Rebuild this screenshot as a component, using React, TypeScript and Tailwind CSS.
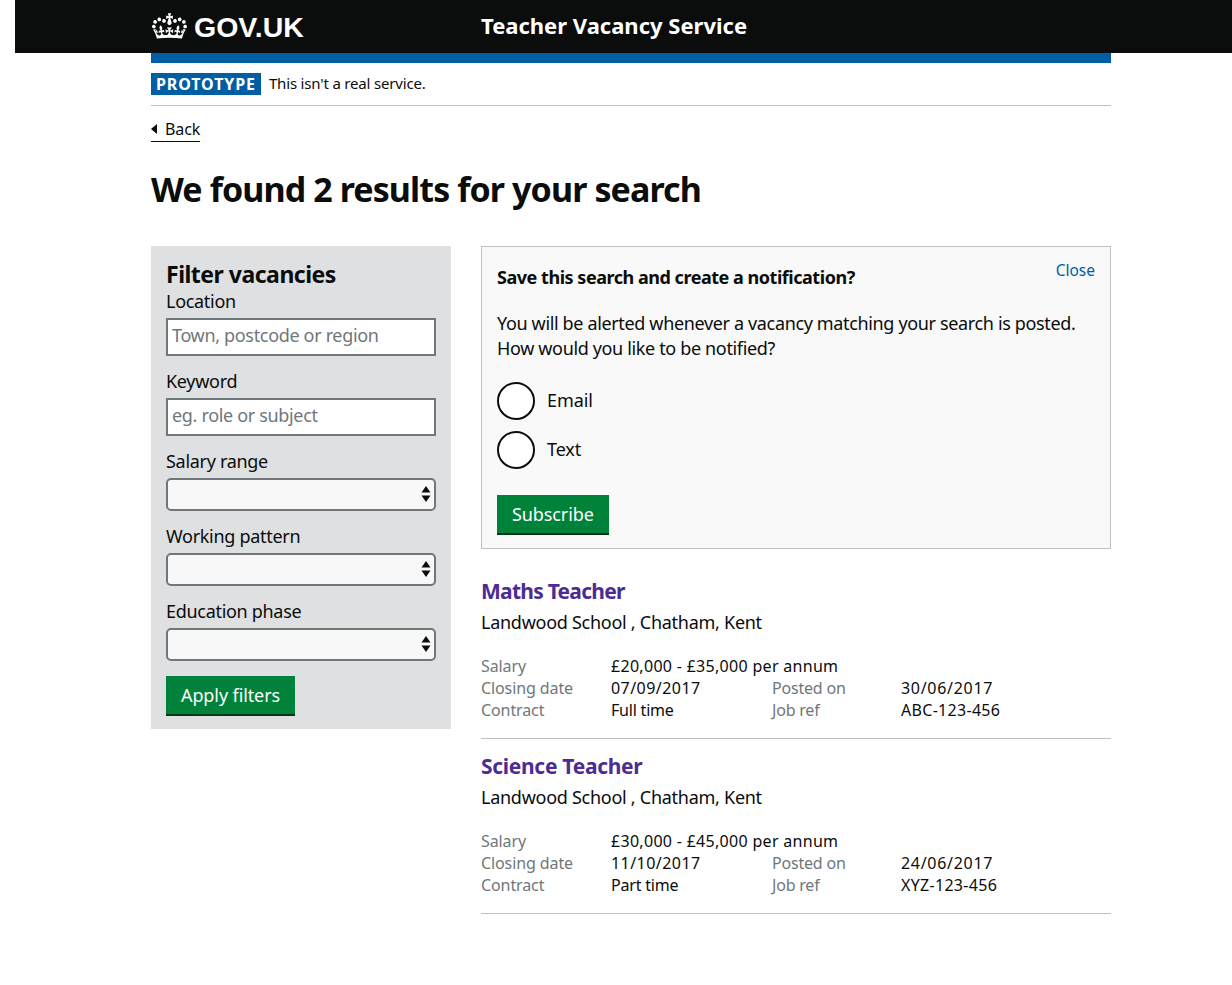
const font = "font-['Noto_Sans','Open_Sans',sans-serif]";

function Crown() {
  return (
    <svg width="35" height="26" viewBox="0 0 132 97" fill="white" className="ml-[1px] shrink-0 -translate-y-[1px]">
      <path d="M25 30.2c3.5 1.5 7.7-.2 9.1-3.7 1.5-3.6-.2-7.8-3.9-9.2-3.6-1.4-7.6.3-9.1 3.9-1.4 3.5.3 7.5 3.9 9zM9 39.5c3.6 1.5 7.8-.2 9.2-3.7 1.5-3.6-.2-7.8-3.9-9.1-3.6-1.5-7.6.2-9.1 3.8-1.4 3.5.3 7.5 3.8 9zM4.4 57.2c3.5 1.5 7.7-.2 9.1-3.8 1.5-3.6-.2-7.7-3.9-9.1-3.5-1.5-7.6.3-9.1 3.8-1.4 3.5.3 7.6 3.9 9.1zm38.3-21.4c3.5 1.5 7.7-.2 9.1-3.8 1.5-3.6-.2-7.7-3.9-9.1-3.6-1.5-7.6.3-9.1 3.8-1.3 3.6.4 7.7 3.9 9.1zm64.4-5.6c-3.6 1.5-7.8-.2-9.1-3.7-1.5-3.6.2-7.8 3.8-9.2 3.6-1.4 7.7.3 9.2 3.9 1.3 3.5-.4 7.5-3.9 9zm15.9 9.3c-3.6 1.5-7.7-.2-9.1-3.7-1.5-3.6.2-7.8 3.7-9.1 3.6-1.5 7.7.2 9.2 3.8 1.5 3.5-.3 7.5-3.8 9zm4.7 17.7c-3.6 1.5-7.8-.2-9.2-3.8-1.5-3.6.2-7.7 3.9-9.1 3.6-1.5 7.7.3 9.2 3.8 1.3 3.5-.4 7.6-3.9 9.1zM89.3 35.8c-3.6 1.5-7.8-.2-9.2-3.8-1.4-3.6.2-7.7 3.9-9.1 3.6-1.5 7.7.3 9.2 3.8 1.4 3.6-.3 7.7-3.9 9.1zM69.7 17.7l8.9 4.7V9.3l-8.9 2.8c-.2-.3-.5-.6-.9-.9L72.4 0H59.6l3.5 11.2c-.3.3-.6.5-.9.9l-8.8-2.8v13.1l8.8-4.7c.3.3.6.7.9.9l-5 15.4v.1c-.2.8-.4 1.6-.4 2.4 0 4.1 3.1 7.5 7 8.1h.2c.3 0 .7.1 1 .1.4 0 .7 0 1-.1h.2c4-.6 7.1-4.1 7.1-8.1 0-.8-.1-1.7-.4-2.4V34l-5.1-15.4c.4-.2.7-.6 1-.9zM66 92.8c16.9 0 32.8 1.1 47.1 3.2 4-16.9 8.9-26.7 14-33.5l-9.6-3.4c1 4.9 1.1 7.2 0 10.2-1.5-1.4-3-4.3-4.2-8.7L108.6 76c2.8-2 5-3.2 7.5-3.3-4.4 9.4-10 11.9-13.6 11.2-4.3-.8-6.3-4.6-5.6-7.9 1-4.7 5.7-5.9 8-.5 4.3-8.7-3-11.4-7.6-8.8 7.1-7.2 7.9-13.5 2.1-21.1-8 6.1-8.1 12.3-4.5 20.8-4.7-5.4-12.1-2.5-9.5 6.2 3.4-5.2 7.9-2 7.2 3.1-.6 4.3-6.4 7.8-13.5 7.2-10.3-.9-10.9-8-11.2-13.8 2.5-.5 7.1 1.8 11 7.3L80.2 60c-4.1 4.4-8 5.3-12.3 5.4 1.4-4.4 8-11.6 8-11.6H55.5s6.4 7.2 7.9 11.6c-4.2-.1-8-1-12.3-5.4l1.4 16.4c3.9-5.5 8.5-7.7 10.9-7.3-.3 5.8-.9 12.8-11.1 13.8-7.2.6-12.9-2.9-13.5-7.2-.7-5 3.8-8.3 7.1-3.1 2.7-8.7-4.6-11.6-9.4-6.2 3.7-8.5 3.6-14.7-4.6-20.8-5.8 7.6-5 13.9 2.2 21.1-4.7-2.6-11.9.1-7.7 8.8 2.3-5.5 7.1-4.2 8.1.5.7 3.3-1.3 7.1-5.7 7.9-3.5.7-9-1.8-13.5-11.2 2.5.1 4.7 1.3 7.5 3.3l-4.7-15.4c-1.2 4.4-2.7 7.2-4.3 8.7-1.1-3-.9-5.3 0-10.2l-9.5 3.4c5 6.9 9.9 16.7 14 33.5 14.8-2.1 30.8-3.2 47.7-3.2z" />
    </svg>
  );
}

function Select({ label }: { label: string }) {
  return (
    <div className="mt-[13px]">
      <div className="text-[18px] leading-[25px] tracking-[-0.3px] text-[#0b0c0c]">{label}</div>
      <div className="relative mt-[4px] h-[33px]">
        <select className="block h-[33px] w-[270px] appearance-none rounded-[5px] border-2 border-[#6f777b] bg-[#f8f8f8]" aria-label={label} />
        <svg width="10" height="18" viewBox="0 0 10 18" className="absolute right-[5px] top-[7px]" fill="#0b0c0c">
          <path d="M5 1 L9.5 7.5 H0.5 Z M0.5 10.5 H9.5 L5 17 Z" />
        </svg>
      </div>
    </div>
  );
}

function TextField({ label, placeholder, className }: { label: string; placeholder: string; className: string }) {
  return (
    <div className={className}>
      <div className="text-[18px] leading-[25px] tracking-[-0.3px] text-[#0b0c0c]">{label}</div>
      <input
        placeholder={placeholder}
        className="mt-[4px] block h-[38px] w-[270px] border-2 border-[#6f777b] bg-white px-[4px] pb-[4px] text-[18px] tracking-[-0.33px] placeholder:text-[#6f777b]"
      />
    </div>
  );
}

function Meta({ k, v, vc, k2, v2, v2c }: { k: string; v: string; vc: string; k2?: string; v2?: string; v2c?: string }) {
  return (
    <div className="flex h-[22px] items-center text-[16px] leading-[22px]">
      <div className="w-[130px] tracking-[-0.1px] text-[#6f777b]">{k}</div>
      <div className={`w-[161px] whitespace-nowrap text-[#0b0c0c] ${vc}`}>{v}</div>
      {k2 && <div className="w-[129px] tracking-[-0.2px] text-[#6f777b]">{k2}</div>}
      {v2 && <div className={`text-[#0b0c0c] ${v2c}`}>{v2}</div>}
    </div>
  );
}

function Job({ title, titleClass, salary, closing, posted, contract, job, className }: { title: string; titleClass: string; salary: string; closing: string; posted: string; contract: string; job: string; className?: string }) {
  return (
    <div className={`h-[175px] border-b border-[#bfc1c3] pt-[12px] ${className ?? ""}`}>
      <a href="#" className={`block text-[21px] font-bold leading-[30px] text-[#4c2c92] no-underline ${titleClass}`}>{title}</a>
      <div className="mt-[4px] text-[18px] leading-[25px] tracking-[-0.27px] text-[#0b0c0c]">Landwood School , Chatham, Kent</div>
      <div className="mt-[20px]">
        <Meta k="Salary" v={salary} vc="tracking-[0.3px]" />
        <Meta k="Closing date" v={closing} vc="tracking-[0.45px]" k2="Posted on" v2={posted} v2c="tracking-[0.7px]" />
        <Meta k="Contract" v={contract} vc="tracking-[-0.2px]" k2="Job ref" v2={job} v2c="tracking-[0.3px]" />
      </div>
    </div>
  );
}

function Radio({ label, className }: { label: string; className: string }) {
  return (
    <label className={`flex h-[38px] items-center ${className}`}>
      <span className="h-[38px] w-[38px] rounded-full border-2 border-[#0b0c0c] bg-white" />
      <span className="ml-[12px] -translate-y-[1px] text-[18px] tracking-[-0.1px] text-[#0b0c0c]">{label}</span>
    </label>
  );
}

function GreenButton({ children, className }: { children: string; className: string }) {
  return (
    <button className={`block h-[40px] border-b-2 border-[#003618] bg-[#00823b] px-[15px] text-[18px] leading-[38px] tracking-[-0.1px] text-white ${className}`}>
      {children}
    </button>
  );
}

export default function App() {
  return (
    <div className={`min-h-[985px] bg-white ${font} text-[#0b0c0c]`}>
      <header className="ml-[15px] h-[53px] bg-[#0b0c0c] text-white">
        <div className="ml-[136px] flex h-[53px] items-center">
          <div className="flex w-[330px] items-center gap-[7px]">
            <Crown />
            <span className="font-['Liberation_Sans',sans-serif] text-[28.5px] font-bold leading-[30px]">GOV.UK</span>
          </div>
          <span className="-translate-y-[1px] text-[22px] font-bold">Teacher Vacancy Service</span>
        </div>
      </header>
      <main className="ml-[151px] w-[960px]">
        <div className="h-[10px] bg-[#005ea5]" />
        <div className="flex h-[43px] items-center border-b border-[#bfc1c3] pb-[1px]">
          <span className="flex h-[22px] items-center bg-[#005ea5] px-[5px] text-[16px] font-bold tracking-[0.9px] text-white">PROTOTYPE</span>
          <span className="ml-[8px] text-[15px] tracking-[-0.18px] text-[#0b0c0c]">This isn't a real service.</span>
        </div>
        <a href="#" className="mt-[13px] flex h-[23px] w-[49px] items-center border-b border-[#0b0c0c] pb-[2px] text-[16px] tracking-[-0.1px] text-[#0b0c0c] no-underline">
          <svg width="6" height="10" viewBox="0 0 6 10" fill="#0b0c0c" className="mr-[8px] shrink-0"><path d="M6 0 V10 L0 5 Z" /></svg>
          Back
        </a>
        <h1 className="mt-[27px] text-[34px] font-bold leading-[40px] tracking-[-0.9px]">We found 2 results for your search</h1>
        <div className="mt-[37px] flex items-start gap-[30px]">
          <aside className="h-[483px] w-[300px] bg-[#dee0e2] px-[15px] pt-[14px]">
            <h2 className="text-[23px] font-bold leading-[29px] tracking-[-0.5px]">Filter vacancies</h2>
            <TextField label="Location" placeholder="Town, postcode or region" className="mt-0" />
            <TextField label="Keyword" placeholder="eg. role or subject" className="mt-[13px]" />
            <Select label="Salary range" />
            <Select label="Working pattern" />
            <Select label="Education phase" />
            <GreenButton className="mt-[15px]">Apply filters</GreenButton>
          </aside>
          <section className="w-[630px]">
            <div className="h-[303px] border border-[#bfc1c3] bg-[#f8f9f8] px-[15px] pt-[16px]">
              <div className="flex items-start justify-between">
                <h3 className="text-[18px] font-bold leading-[28px] tracking-[-0.47px]">Save this search and create a notification?</h3>
                <a href="#" className="-mt-[7px] text-[15.5px] leading-[28px] text-[#005ea5] no-underline">Close</a>
              </div>
              <p className="mt-[20px] text-[18px] leading-[25px] tracking-[-0.35px]">
                You will be alerted whenever a vacancy matching your search is posted.<br />How would you like to be notified?
              </p>
              <Radio label="Email" className="mt-[21px]" />
              <Radio label="Text" className="mt-[11px]" />
              <GreenButton className="mt-[26px]">Subscribe</GreenButton>
            </div>
            <Job className="mt-[15px]" title="Maths Teacher" titleClass="tracking-[-0.75px]" salary="£20,000 - £35,000 per annum" closing="07/09/2017" posted="30/06/2017" contract="Full time" job="ABC-123-456" />
            <Job title="Science Teacher" titleClass="tracking-[-0.3px]" salary="£30,000 - £45,000 per annum" closing="11/10/2017" posted="24/06/2017" contract="Part time" job="XYZ-123-456" />
          </section>
        </div>
      </main>
    </div>
  );
}
